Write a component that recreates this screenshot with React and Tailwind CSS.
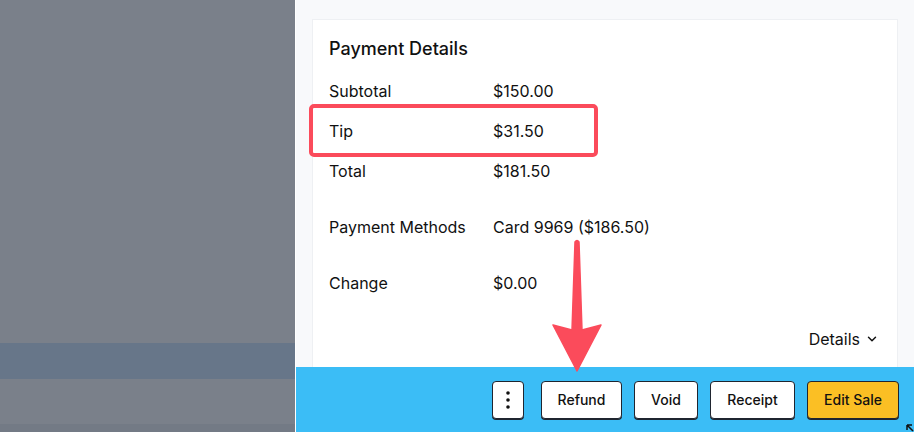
import { ChevronDown } from 'lucide-react';

const rows = [
  { label: 'Subtotal', value: '$150.00', h: 'h-[40px]' },
  { label: 'Tip', value: '$31.50', h: 'h-[40px]' },
  { label: 'Total', value: '$181.50', h: 'h-[40px]' },
  { label: 'Payment Methods', value: 'Card 9969 ($186.50)', h: 'h-[72px]' },
  { label: 'Change', value: '$0.00', h: 'h-[40px]' },
];

function ActionButton({ children, className = '' }) {
  return (
    <button className={`h-[38px] rounded-[4px] border border-[#1f2530] shadow-[0_1px_0_#1f2530] text-[14px] font-medium text-[#111] flex items-center justify-center ${className}`}>
      {children}
    </button>
  );
}

export default function App() {
  return (
    <div className="relative w-[914px] h-[432px] overflow-hidden flex font-['Inter','Liberation_Sans',sans-serif]">
      {/* Dimmed page behind the drawer */}
      <div className="w-[295px] flex flex-col bg-[#7a808a]">
        <div className="h-[343px]" />
        <div className="h-[36px] bg-[#677689]" />
        <div className="h-[45px]" />
        <div className="flex-1 bg-[#737a85]" />
      </div>
      <div className="w-px bg-white" />

      {/* Drawer */}
      <div className="flex-1 flex flex-col bg-[#f8f9fb]">
        <div className="flex-1 pt-[19px] px-[16px] overflow-hidden">
          <div className="relative h-full bg-white border border-[#eef0f3] border-b-0 pl-[16px] pt-[20px] text-[#111]">
            <h2 className="text-[18px] leading-[18px] font-medium">Payment Details</h2>
            <div className="mt-[13px] flex flex-col">
              {rows.map(r => (
                <div key={r.label} className={`${r.h} grid grid-cols-[164px_1fr] items-center text-[16px]`}>
                  <span>{r.label}</span>
                  <span>{r.value}</span>
                </div>
              ))}
            </div>
            <div className="mt-[16px] h-[40px] flex items-center justify-end pr-[18px] text-[16px] gap-[5px]">
              <span>Details</span>
              <ChevronDown size={14} strokeWidth={2.5} />
            </div>

            {/* Highlight box */}
            <div className="absolute left-[-4px] top-[84px] w-[289px] h-[53px] border-[4px] border-[#fb4b5b] rounded-[5px]" />
          </div>
        </div>

        <div className="h-[65px] bg-[#3bbdf6] flex items-center justify-end gap-[12px] pr-[15px]">
          <ActionButton className="w-[32px] mr-[5px] bg-white">
            <svg width="4" height="18" viewBox="0 0 4 18" fill="#111">
              <circle cx="2" cy="2" r="1.8" />
              <circle cx="2" cy="9" r="1.8" />
              <circle cx="2" cy="16" r="1.8" />
            </svg>
          </ActionButton>
          <ActionButton className="w-[81px] bg-white">Refund</ActionButton>
          <ActionButton className="w-[64px] bg-white">Void</ActionButton>
          <ActionButton className="w-[85px] bg-white">Receipt</ActionButton>
          <ActionButton className="w-[92px] bg-[#fbbf24]">Edit Sale</ActionButton>
        </div>
      </div>

      {/* Annotation arrow */}
      <svg className="absolute left-0 top-0 pointer-events-none" width="914" height="432" viewBox="0 0 914 432">
        <path
          d="M575 242 Q577 239 579 242 L582 330 L601 325 L577 371 L553 325 L572 330 Z"
          fill="#fb4b5b"
          stroke="#fb4b5b"
          strokeWidth="1.5"
          strokeLinejoin="round"
        />
      </svg>

      {/* resize corner */}
      <svg className="absolute right-0 bottom-0" width="8" height="8" viewBox="0 0 8 8">
        <path d="M1 1 L1 6 M1 1 L6 1 M1 1 L7 7" stroke="#111" strokeWidth="1.5" fill="none" />
      </svg>
    </div>
  );
}
